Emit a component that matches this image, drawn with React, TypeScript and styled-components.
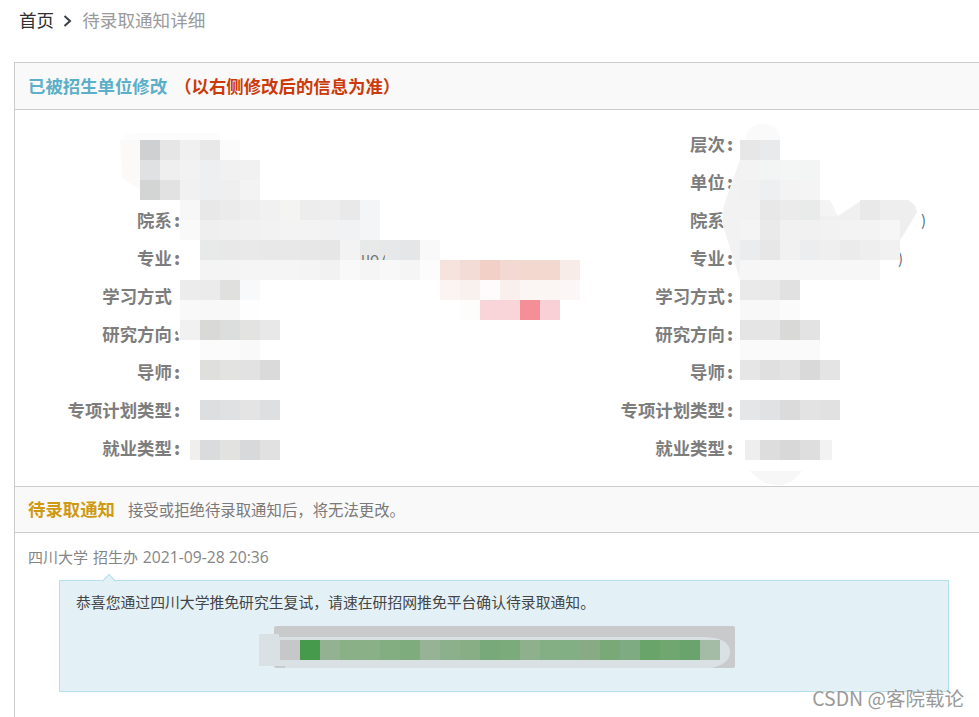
import React from 'react';
import styled, { createGlobalStyle } from 'styled-components';

const GlobalStyle = createGlobalStyle`
  html, body {
    margin: 0;
    padding: 0;
    background: #fff;
  }
  body {
    font-family: "Noto Sans CJK SC", "Liberation Sans", sans-serif;
  }
`;

const Page = styled.div`
  position: relative;
  width: 979px;
  height: 717px;
  overflow: hidden;
  background: #fff;
`;

const Crumbs = styled.nav`
  display: flex;
  align-items: center;
  height: 40px;
  padding-left: 19px;
  margin-bottom: 22px;
  font-size: 17.6px;
  line-height: 40px;

  svg {
    margin: 2px 10px 0 9px;
  }
`;

const CrumbLink = styled.span`
  color: #2f2f2f;
`;

const CrumbCurrent = styled.span`
  color: #9a9a9a;
`;

const Panel = styled.section`
  margin-left: 14px;
  border-left: 1px solid #ccc;
  border-top: 1px solid #ccc;
  min-height: 660px;
`;

const PanelHead = styled.header<{ $height: number }>`
  display: flex;
  align-items: center;
  height: ${(props) => props.$height}px;
  padding-left: 13px;
  background: #f9f9f9;
  border-bottom: 1px solid #ccc;
`;

const HeadTitle = styled.h3<{ $color: string }>`
  margin: 0 0 2px;
  font-size: 17.4px;
  font-weight: 700;
  color: ${(props) => props.$color};
`;

const HeadWarn = styled(HeadTitle)`
  margin-left: 7px;
`;

const HeadHint = styled.span`
  margin: 0 0 2px 13px;
  font-size: 15.4px;
  color: #7a7a7a;
`;

const InfoGrid = styled.div`
  display: grid;
  grid-template-columns: 555px 1fr;
  padding: 14px 0 20px;
  border-bottom: 1px solid #ccc;
`;

const InfoColumn = styled.div<{ $labelWidth: number }>`
  display: grid;
  grid-template-columns: ${(props) => props.$labelWidth}px 1fr;
  grid-auto-rows: 38px;
  align-items: center;
`;

const Label = styled.div`
  font-size: 17.4px;
  font-weight: 700;
  color: #7d7d7d;
  text-align: right;
  white-space: nowrap;

  b {
    margin-left: 2px;
  }
`;

const Value = styled.div<{ $indent?: number }>`
  padding-left: ${(props) => props.$indent ?? 2}px;
  font-size: 15px;
  color: #5a6b80;
`;

const NoticeBody = styled.div`
  padding: 12px 29px 0 13px;
`;

const Meta = styled.div`
  font-family: "Open Sans", "Noto Sans CJK SC", sans-serif;
  font-size: 15px;
  line-height: 24px;
  word-spacing: 1px;
  color: #858585;
`;

const MetaTime = styled.span`
  font-size: 15.7px;
  word-spacing: 0;
`;

const Notice = styled.div`
  position: relative;
  margin: 11px 0 0 31px;
  width: 888px;
  height: 110px;
  background: #e3f1f7;
  border: 1px solid #b4e0ea;
`;

const NoticeArrow = styled.i`
  position: absolute;
  top: -5px;
  left: 44px;
  width: 9px;
  height: 9px;
  background: #e3f1f7;
  border-top: 1px solid #b4e0ea;
  border-left: 1px solid #b4e0ea;
  transform: rotate(45deg);
`;

const NoticeText = styled.p`
  margin: 0;
  padding: 10px 0 0 16px;
  font-size: 14.83px;
  line-height: 22px;
  color: #444;
`;

const Mosaic = styled.svg`
  display: block;
  margin: 13px 0 0 199px;
`;

const Censor = styled.svg`
  position: absolute;
  top: 0;
  left: 0;
  pointer-events: none;
`;

const Watermark = styled.div`
  position: absolute;
  right: 15px;
  bottom: 6px;
  font-size: 19.5px;
  line-height: 26px;
  color: #9a9a9a;
  text-shadow: 0 0 1px #fff;
  white-space: nowrap;
`;

const fields = ['层次', '单位', '院系', '专业', '学习方式', '研究方向', '导师', '专项计划类型', '就业类型'];

const leftValues: Record<string, { text: string; indent: number }> = {
  专业: { text: '（', indent: 0 },
};

const rightValues: Record<string, { text: string; indent: number }> = {
  院系: { text: ')', indent: 188 },
  专业: { text: ')', indent: 165 },
};

// 打码的马赛克块：y, 起始 x, 每格 20px 的颜色
const patches: [number, number, string[]][] = [
  [140, 140, ['#cfd0d1', '#e6e6e6', '#f0f0f0', '#e8e8e8', '#fbfbfb']],
  [160, 140, ['#e0e1e2', '#efefef', '#f2f2f3', '#eeeff1', '#f1f1f2', '#f1f1f2']],
  [180, 140, ['#d3d5d5', '#e2e2e3', '#f1f1f1', '#eeeff0', '#efeff0', '#f3f3f4']],
  [200, 180, ['#f7f7f7', '#e8e8e8', '#ebebeb', '#eeeeee', '#f1f1f1', '#f4f4f3', '#ededee', '#eeeeee', '#e9e9ea', '#f4f5f6']],
  [220, 180, ['#f9f9f9', '#efefef', '#f0f0f0', '#f1f1f1', '#f2f2f2', '#f3f3f3', '#f3f3f3', '#f2f2f2', '#f1f2f3', '#f4f5f6']],
  [240, 200, ['#e8e9e9', '#e8e8e8', '#e9e9e9', '#e8e8e8', '#e8e8e8', '#e7e7e7', '#e6e6e6', '#f3f3f3', '#e8eaea', '#e7e8e9', '#e4e6e7', '#f9f9f9']],
  [260, 200, ['#f4f4f4', '#f4f4f4', '#f5f5f5', '#f5f5f5', '#f5f5f5', '#f4f4f4', '#f2f2f2', '#f9f9f9', '#f5f5f5', '#f8f8f8', '#f5f5f6', '#fcfcfc', '#f7e3dd', '#f3dcd6', '#f2d0c8', '#f3d9d2', '#f3d8d0', '#f3d8d0', '#f8ece9']],
  [280, 180, ['#ececec', '#ebebeb', '#e0e0df', '#f8f9fa']],
  [280, 440, ['#fbf4f2', '#f9f1ee', '#fdfbfb', '#f9f0ee', '#fbf5f3', '#fbf5f3', '#fcf7f6']],
  [300, 180, ['#f9f9f9', '#f8f8f8', '#f8f8f8', '#fefefe']],
  [300, 460, ['#fdfdfc', '#f9d4d8', '#f9d4d8', '#f48f97', '#f9d0d6']],
  [320, 180, ['#f1f1f1', '#d9d9d7', '#dcdddd', '#e3e3e2', '#e8e8e8']],
  [340, 200, ['#fbfbfb', '#fbfbfb', '#f9f9f9', '#ffffff']],
  [360, 200, ['#dfdfde', '#e3e3e2', '#e2e2e2', '#d9dad9']],
  [400, 200, ['#dddedf', '#e0e1e2', '#e3e4e3', '#dedfe0']],
  [440, 200, ['#dadbdd', '#e2e2e0', '#d8d9da', '#e1e1e1']],
  [140, 740, ['#e7e7e7', '#e9eaeb']],
  [160, 740, ['#f3f3f3', '#f3f4f4', '#f4f5f5', '#f3f4f4']],
  [180, 740, ['#f1f1f2', '#eeeff1', '#f3f3f4', '#f4f4f5']],
  [200, 740, ['#f2f2f2', '#e8e8e8', '#ebebeb', '#e9eaea']],
  [220, 740, ['#f4f4f4', '#eaeaea', '#f1f1f1', '#f1f1f1', '#f2f2f2', '#f3f3f3', '#f3f3f3', '#f6f6f6']],
  [240, 740, ['#eaecee', '#e7e7e7', '#f1f1f1', '#ecedef', '#efefef', '#ebebeb', '#eeeeee', '#f1f1f1']],
  [260, 740, ['#f6f6f6', '#f7f7f7', '#f7f7f7', '#f7f7f7', '#f7f7f7', '#f7f7f7', '#f7f7f7']],
  [280, 740, ['#eaeaea', '#e9e9e9', '#e1e1e1']],
  [300, 740, ['#f8f8f8', '#f8f8f8', '#fbfbfb']],
  [320, 740, ['#e5e5e5', '#e5e5e5', '#d9dad8', '#e3e3e3']],
  [340, 740, ['#fafafa', '#fafafa', '#fafafa', '#fafafa']],
  [360, 740, ['#e6e6e6', '#e0e0e0', '#e3e3e3', '#d9d9d9', '#e4e4e4']],
  [400, 740, ['#e5e6e7', '#e1e2e3', '#dbdbdb', '#e3e3e3', '#e1e1e1']],
  [440, 760, ['#dddddd', '#d8d8d8', '#dedede']],
];

const greens = [
  '#469a4b', '#93b292', '#8ab088', '#8ab088', '#83ae81', '#7fac7c', '#97b396', '#8db08c', '#88ae86', '#77a97a',
  '#7cab7b', '#8fb08d', '#84ae83', '#83af85', '#88ab85', '#78a976', '#7fab83', '#69a568', '#70a670', '#68a46b', '#a4bba6',
];

function CensorLayer() {
  return (
    <Censor width="979" height="717" viewBox="0 0 979 717">
      <defs>
        <clipPath id="leftover">
          <rect x="355" y="255" width="30" height="5" />
        </clipPath>
      </defs>
      {/* 涂白的部分 */}
      <path d="M125 140 Q126 133 140 133 L215 134 L240 140 L240 160 L260 160 L260 200 L380 200 L380 240 L280 240 L280 470 L190 470 L190 360 L172 320 L172 285 L195 245 L178 200 L140 190 L122 175 L120 160 Z" fill="#ffffff" />
      <path d="M120 140 h20 v50 l-18 -12 z" fill="#fbfaf9" />
      <path d="M125 134 Q127 133 140 133 H220 L220 140 H125 Z" fill="#fcfcfc" />
      <rect x="190" y="440" width="10" height="20" fill="#f0efed" />
      <path d="M745 140 Q747 124 762 124 Q780 124 780 140 Z" fill="#fafafa" />
      <path d="M740 160 L724 205 L722 222 L735 260 L740 280 L745 340 L745 470 L832 470 L840 360 L820 340 L820 280 L885 280 L900 240 L915 225 L920 210 L912 200 L880 200 L860 200 L830 215 L825 200 L820 160 Z" fill="#ffffff" />
      <path d="M740 160 L724 205 L722 222 L740 280 Z" fill="#f2f2f3" />
      <path d="M820 200 h10 l8 16 h-18 z" fill="#f4f4f4" />
      <path d="M838 216 L862 200 H880 V240 H820 V216 Z" fill="#f0f0f0" />
      <path d="M860 200 h20 v20 h-20 z" fill="#e9e9ea" />
      <path d="M880 200 H908 Q916 204 917 212 Q910 225 900 240 H880 Z" fill="#eeeeee" />
      <path d="M750 471 Q762 485 778 485 Q792 485 802 471 Z" fill="#f7f7f7" />
      <rect x="745" y="440" width="15" height="20" fill="#eeeeee" />
      <rect x="820" y="440" width="12" height="20" fill="#f2f2f2" />
      {patches.map(([y, x, colors]) =>
        colors.map((color, i) => (
          <rect key={`${y}-${x}-${i}`} x={x + i * 20} y={y} width="20" height="20" fill={color} />
        )),
      )}
      <text x="361" y="264" fontSize="15" fill="#777" clipPath="url(#leftover)">uo7</text>
    </Censor>
  );
}

export default function App() {
  return (
    <Page>
      <GlobalStyle />
      <Crumbs>
        <CrumbLink>首页</CrumbLink>
        <svg width="9" height="12" viewBox="0 0 9 12">
          <path d="M1.5 1 L7 6 L1.5 11" fill="none" stroke="#3a3f46" strokeWidth="2" />
        </svg>
        <CrumbCurrent>待录取通知详细</CrumbCurrent>
      </Crumbs>
      <Panel>
        <PanelHead $height={46}>
          <HeadTitle $color="#5bafc8">已被招生单位修改</HeadTitle>
          <HeadWarn $color="#cc3a0a">（以右侧修改后的信息为准）</HeadWarn>
        </PanelHead>
        <InfoGrid>
          <InfoColumn $labelWidth={165}>
            {fields.map((name) => (
              <React.Fragment key={name}>
                <Label>{name}<b>:</b></Label>
                <Value $indent={leftValues[name]?.indent}>{leftValues[name]?.text}</Value>
              </React.Fragment>
            ))}
          </InfoColumn>
          <InfoColumn $labelWidth={163}>
            {fields.map((name) => (
              <React.Fragment key={name}>
                <Label>{name}<b>:</b></Label>
                <Value $indent={rightValues[name]?.indent}>{rightValues[name]?.text}</Value>
              </React.Fragment>
            ))}
          </InfoColumn>
        </InfoGrid>
        <PanelHead $height={45}>
          <HeadTitle $color="#cf9a12">待录取通知</HeadTitle>
          <HeadHint>接受或拒绝待录取通知后，将无法更改。</HeadHint>
        </PanelHead>
        <NoticeBody>
          <Meta>四川大学 招生办 <MetaTime>2021-09-28 20:36</MetaTime></Meta>
          <Notice>
            <NoticeArrow />
            <NoticeText>恭喜您通过四川大学推免研究生复试，请速在研招网推免平台确认待录取通知。</NoticeText>
            <Mosaic width="476" height="42" viewBox="0 0 476 42">
              <rect x="15" y="0" width="461" height="42" rx="2" fill="#c9cacc" />
              <path d="M0 8 H20 V11 H446 Q471 12 471 26 Q471 38 452 42 H26 V40 H0 Z" fill="#d9e1e5" />
              <rect x="21" y="14" width="20" height="20" fill="#c5c7c8" />
              {greens.map((color, i) => (
                <rect key={i} x={41 + i * 20} y="14" width="20" height="20" fill={color} />
              ))}
            </Mosaic>
          </Notice>
        </NoticeBody>
      </Panel>
      <CensorLayer />
      <Watermark>CSDN @客院载论</Watermark>
    </Page>
  );
}
